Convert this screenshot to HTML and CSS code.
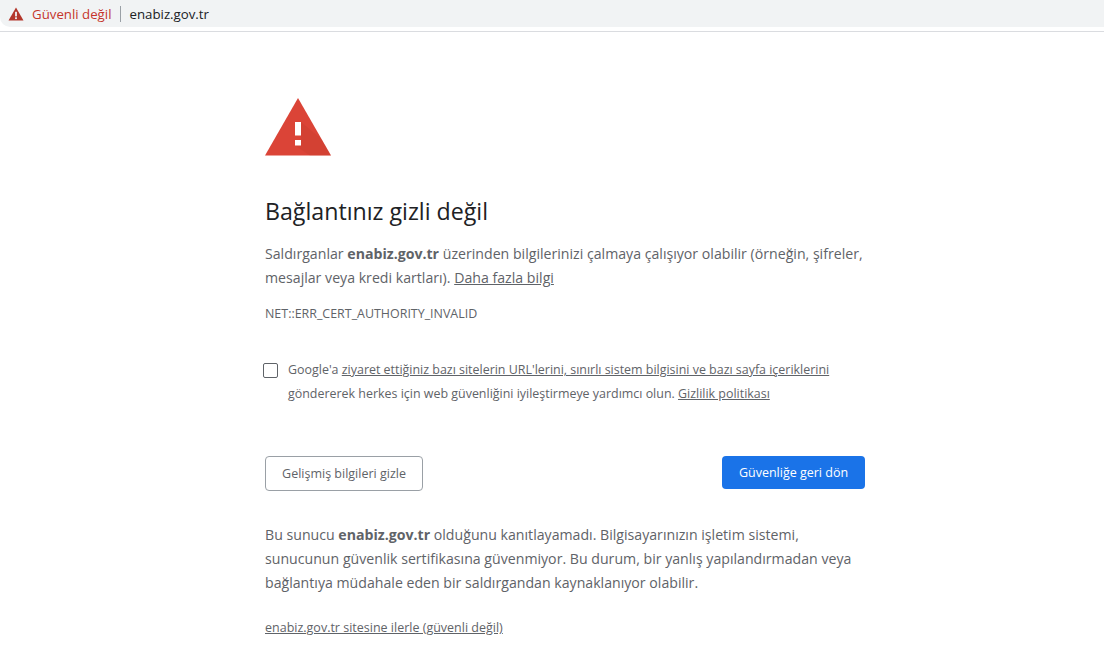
FILE: index.html
```html
<!DOCTYPE html>
<html lang="tr">
<head>
    <meta charset="UTF-8">
    <title>Gizlilik hatası</title>
    <link rel="stylesheet" href="styles.css">
</head>
<body>

    <!-- Address bar -->
    <div class="address-bar">
        <svg class="bar-icon" width="16" height="14" viewBox="0 0 16 14">
            <path d="M8 0.5 L15.5 13.5 L0.5 13.5 Z" fill="#b3362b"/>
            <rect x="7.1" y="4.8" width="1.8" height="4.6" fill="#f1f3f4"/>
            <rect x="7.1" y="10.3" width="1.8" height="1.8" fill="#f1f3f4"/>
        </svg>
        <span class="not-secure">Güvenli değil</span>
        <span class="bar-divider"></span>
        <span class="bar-url">enabiz.gov.tr</span>
    </div>
    <div class="bar-rule"></div>

    <div class="container">
        <svg class="warn-icon" width="66" height="58" viewBox="0 0 66 58">
            <path d="M33 0 L66 57.5 L0 57.5 Z" fill="#db4437"/>
            <path d="M36 24 L56 40.5 L66 57.5 L45 57.5 L30 47.5 L36 42 Z" fill="#b8352a" opacity="0.22"/>
            <rect x="30" y="24" width="6" height="13.5" fill="#fff"/>
            <rect x="30" y="42" width="6" height="5.5" fill="#fff"/>
        </svg>

        <h1>Bağlantınız gizli değil</h1>

        <p class="intro">Saldırganlar <b>enabiz.gov.tr</b> üzerinden bilgilerinizi çalmaya çalışıyor olabilir (örneğin, şifreler, mesajlar veya kredi kartları). <a href="#">Daha fazla bilgi</a></p>

        <div class="error-code">NET::ERR_CERT_AUTHORITY_INVALID</div>

        <div class="optin">
            <span class="checkbox"></span>
            <p>Google'a <a href="#">ziyaret ettiğiniz bazı sitelerin URL'lerini, sınırlı sistem bilgisini ve bazı sayfa içeriklerini</a> göndererek herkes için web güvenliğini iyileştirmeye yardımcı olun. <a href="#">Gizlilik politikası</a></p>
        </div>

        <div class="buttons">
            <button class="btn-secondary">Gelişmiş bilgileri gizle</button>
            <button class="btn-primary">Güvenliğe geri dön</button>
        </div>

        <p class="details">Bu sunucu <b>enabiz.gov.tr</b> olduğunu kanıtlayamadı. Bilgisayarınızın işletim sistemi, sunucunun güvenlik sertifikasına güvenmiyor. Bu durum, bir yanlış yapılandırmadan veya bağlantıya müdahale eden bir saldırgandan kaynaklanıyor olabilir.</p>

        <a class="proceed" href="#">enabiz.gov.tr sitesine ilerle (güvenli değil)</a>
    </div>

</body>
</html>
```

FILE: styles.css
```css
/* Global Styles */
html, body {
    height: 100%;
    overflow: hidden;
}

body {
    margin: 0;
    background: #fff;
    font-family: "Open Sans", "Noto Sans", sans-serif;
    color: #5f6368;
}

a {
    color: #5f6368;
    text-decoration: underline;
}

/* Address bar */
.address-bar {
    display: flex;
    align-items: center;
    height: 27px;
    padding-left: 8px;
    background: #f1f3f4;
    border-bottom-left-radius: 10px;
    font-size: 13.25px;
}

.bar-rule {
    height: 1px;
    margin-top: 4px;
    background: #dadce0;
}

.bar-icon {
    margin-right: 8px;
}

.not-secure {
    color: #c5352b;
}

.bar-divider {
    width: 1px;
    height: 16px;
    margin: 0 9px 0 8px;
    background: #9aa0a6;
}

.bar-url {
    color: #202124;
}

/* Main content */
.container {
    width: 600px;
    margin: 66px 0 0 265px;
}

.warn-icon {
    display: block;
}

h1 {
    margin: 40px 0 0;
    font-size: 23.2px;
    font-weight: 400;
    line-height: 30px;
    color: #202124;
}

.intro, .details {
    margin: 0;
    font-size: 14.15px;
    line-height: 24px;
}

.intro {
    margin-top: 16px;
}

.error-code {
    margin-top: 14px;
    font-size: 12.45px;
    line-height: 20px;
}

.optin {
    display: flex;
    margin-top: 34px;
}

.optin p {
    margin: 0;
    font-size: 12.45px;
    line-height: 24px;
}

.checkbox {
    flex: none;
    width: 13px;
    height: 13px;
    margin: 5px 10px 0 -2px;
    border: 1px solid #5f6368;
    border-radius: 2px;
}

.buttons {
    display: flex;
    justify-content: space-between;
    align-items: flex-start;
    margin-top: 50px;
}

button {
    font-family: inherit;
    font-size: 12.5px;
    border-radius: 4px;
}

.btn-secondary {
    width: 158px;
    height: 35px;
    background: #fff;
    border: 1px solid #9aa0a6;
    color: #5f6368;
}

.btn-primary {
    width: 143px;
    height: 33px;
    background: #1a73e8;
    border: none;
    color: #fff;
}

.details {
    margin-top: 32px;
}

.proceed {
    display: block;
    margin-top: 23px;
    font-size: 12.5px;
    line-height: 20px;
}
```
